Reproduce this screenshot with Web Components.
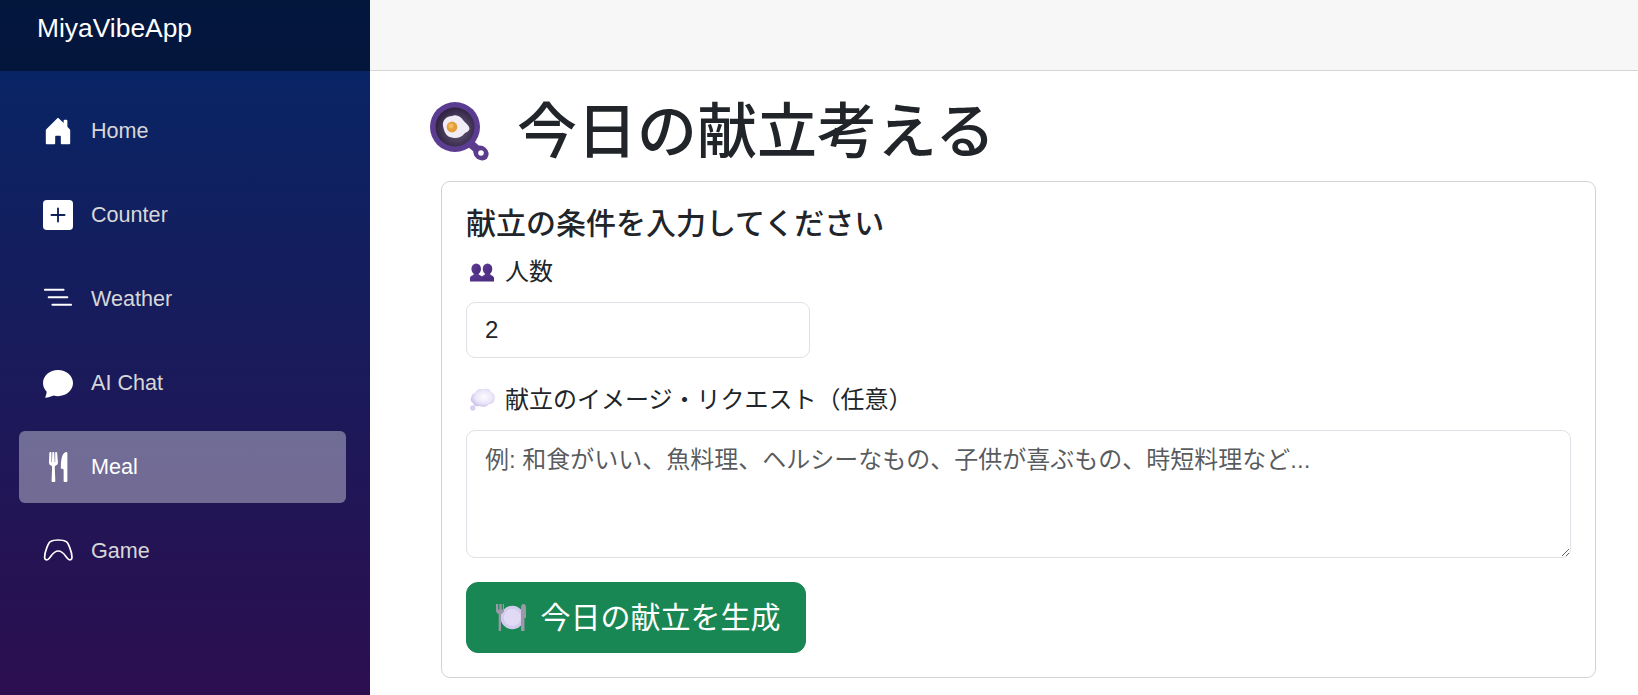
<!DOCTYPE html>
<html lang="ja"><head><meta charset="utf-8"><title>MiyaVibeApp</title>
<style>
html,body{margin:0;height:100%;overflow:hidden}
body{font-family:"Liberation Sans","Noto Sans CJK JP",sans-serif;font-size:24px;line-height:1.5;color:#212529;background:#fff}
</style></head><body>
<app-shell>
  <side-bar slot="side" brand="MiyaVibeApp">
    <nav-item icon="home">Home</nav-item>
    <nav-item icon="plus">Counter</nav-item>
    <nav-item icon="list">Weather</nav-item>
    <nav-item icon="chat">AI Chat</nav-item>
    <nav-item icon="meal" active>Meal</nav-item>
    <nav-item icon="game">Game</nav-item>
  </side-bar>
  <meal-page></meal-page>
</app-shell>
<script>
const def=(name,html)=>customElements.define(name,class extends HTMLElement{
  constructor(){super();const r=this.attachShadow({mode:'open'});r.innerHTML=typeof html==='function'?html(this):html}
});
const ICONS={
home:'<path d="M6.5 14.5v-3.505c0-.245.25-.495.5-.495h2c.25 0 .5.25.5.5v3.5a.5.5 0 0 0 .5.5h4a.5.5 0 0 0 .5-.5v-7a.5.5 0 0 0-.146-.354L13 5.793V2.5a.5.5 0 0 0-.5-.5h-1a.5.5 0 0 0-.5.5v1.293L8.354 1.146a.5.5 0 0 0-.708 0l-6 6A.5.5 0 0 0 1.5 7.5v7a.5.5 0 0 0 .5.5h4a.5.5 0 0 0 .5-.5Z"/>',
plus:'<path d="M2 0a2 2 0 0 0-2 2v12a2 2 0 0 0 2 2h12a2 2 0 0 0 2-2V2a2 2 0 0 0-2-2H2zm6.5 4.5v3h3a.5.5 0 0 1 0 1h-3v3a.5.5 0 0 1-1 0v-3h-3a.5.5 0 0 1 0-1h3v-3a.5.5 0 0 1 1 0z"/>',
list:'<g transform="translate(0 -.45)"><path fill-rule="evenodd" d="M4.5 11.5A.5.5 0 0 1 5 11h10a.5.5 0 0 1 0 1H5a.5.5 0 0 1-.5-.5zm-2-4A.5.5 0 0 1 3 7h10a.5.5 0 0 1 0 1H3a.5.5 0 0 1-.5-.5zm-2-4A.5.5 0 0 1 1 3h10a.5.5 0 0 1 0 1H1a.5.5 0 0 1-.5-.5z"/></g>',
chat:'<path d="M8 15c4.418 0 8-3.134 8-7s-3.582-7-8-7-8 3.134-8 7c0 1.76.743 3.37 1.97 4.6-.097 1.016-.417 2.13-.771 2.966-.079.186.074.394.273.362 2.256-.37 3.597-.938 4.18-1.234A9.06 9.06 0 0 0 8 15z"/>',
meal:'<path d="M13 .5c0-.276-.226-.506-.498-.465-1.703.257-2.94 2.012-3 8.462a.5.5 0 0 0 .498.5c.56.01 1 .13 1 1.003v5.5a.5.5 0 0 0 .5.5h1a.5.5 0 0 0 .5-.5V.5Z"/><path d="M4.25 0a.25.25 0 0 1 .25.25v5.122a.128.128 0 0 0 .256.006l.233-5.14A.25.25 0 0 1 5.24 0h.522a.25.25 0 0 1 .25.238l.233 5.14a.128.128 0 0 0 .256-.006V.25A.25.25 0 0 1 6.75 0h.29a.5.5 0 0 1 .498.458l.423 5.07a1.69 1.69 0 0 1-1.059 1.711l-.053.022a.92.92 0 0 0-.58.884l.3 7.355a.5.5 0 0 1-.5.5h-1a.5.5 0 0 1-.5-.5l.3-7.355a.92.92 0 0 0-.58-.884l-.053-.022a1.69 1.69 0 0 1-1.059-1.712L3.396.458A.5.5 0 0 1 3.894 0h.356Z"/>',
game:'<g transform="scale(.5333)" fill="none" stroke="#fff" stroke-width="1.7"><path d="M7.500 5.600C9 4.600 12 4 15.300 4S21.600 4.600 23.100 5.600C25 6.500 29.200 16 29 21.500C28.900 23.500 27.500 24.300 25.800 23.500C23 22 21 15 15.300 15S7.600 22 4.800 23.500C3.100 24.300 1.700 23.500 1.600 21.500C1.400 16 5.600 6.500 7.500 5.600Z"/></g>'
};
def('app-shell',`<style>:host{display:flex;height:695px;overflow:hidden}::slotted([slot=side]){flex:none}</style><slot name="side"></slot><slot></slot>`);
def('side-bar',h=>`<style>
:host{display:flex;flex-direction:column;width:370px;height:695px;background:linear-gradient(180deg,#052767 0,#3a0647 940px)}
.top{height:71px;flex:none;box-sizing:border-box;padding:10px 0 0 37px;background:rgba(0,0,0,.4);color:#fff;font-size:26.4px;line-height:37.5px}
nav{display:flex;flex-direction:column;gap:12px;padding:24px 24px 0 19px}
</style><div class="top">${h.getAttribute('brand')}</div><nav><slot></slot></nav>`);
def('nav-item',h=>`<style>
:host{display:flex;align-items:center;gap:18px;height:72px;box-sizing:border-box;padding:0 0 0 24px;border-radius:6px;color:#d7d7d7;font-size:21.6px}
:host([active]){background:rgba(255,255,255,.37);color:#fff}
svg{width:30px;height:30px;fill:#fff;flex:none}
</style><svg viewBox="0 0 16 16" aria-hidden="true">${ICONS[h.getAttribute('icon')]}</svg><slot></slot>`);
def('emoji-icon',h=>{
const k=h.getAttribute('name');
const A={
pan:`<svg viewBox="0 0 62 62" width="62" height="62"><defs><radialGradient id="p" cx=".55" cy=".55" r=".55"><stop offset="0" stop-color="#6b627f"/><stop offset=".65" stop-color="#463859"/><stop offset="1" stop-color="#2f2340"/></radialGradient></defs>
<path d="M43 43l9 8" stroke="#5b3c8c" stroke-width="8"/><ellipse cx="53" cy="52" rx="8" ry="7" transform="rotate(40 53 52)" fill="#5b3c8c"/><circle cx="53" cy="52" r="2.800" fill="#fff"/><circle cx="27" cy="26" r="25" fill="#5b3c90"/><circle cx="27" cy="26" r="19.500" fill="url(#p)"/>
<path d="M15 25C14 19 19 15 24 15C29 13 33 16 35 19C37 22 41 24 41.500 27.500C41 31 38 31 36 33C33 37 27 38 22 36C18 35 16 30 15 25Z" fill="#f1edf7"/><circle cx="24" cy="26" r="5.400" fill="#e39f3c"/><circle cx="23" cy="25" r="2.500" fill="#f2bc5e"/></svg>`,
ppl:`<svg viewBox="0 0 24 19" width="24" height="19"><defs><linearGradient id="g" x1="0" y1="0" x2="1" y2="1"><stop offset="0" stop-color="#5f3d99"/><stop offset="1" stop-color="#472878"/></linearGradient></defs><g fill="url(#g)"><ellipse cx="6.200" cy="6" rx="4.800" ry="5.500"/><ellipse cx="17.500" cy="6" rx="4.800" ry="5.500"/><path d="M0 18.500V15C0 13 3 12.500 4 11H8.500C9 12 11 12.500 12 13.500C13 12.500 14.500 12 15 11H20C21 12.500 24 13 24 15V18.500Z"/></g></svg>`,
cloud:`<svg viewBox="0 0 26 25" width="26" height="25" style="margin-right:-2px"><defs><radialGradient id="c" cx=".55" cy=".45" r=".6"><stop offset="0" stop-color="#fdfcff"/><stop offset=".6" stop-color="#ebe6f8"/><stop offset="1" stop-color="#c6bce8"/></radialGradient></defs><path d="M5 5C6 2 10 0 13 1.500C16 0 20 1 21 4C24 5 25.500 8 24.500 11C24.500 14 22 16 19 16C17 19 12 19.500 9.500 18C6.500 19 3.500 17.500 3 15C.5 13.500 .2 10.500 1.500 8.500C2 6.500 3.500 5 5 5Z" fill="url(#c)"/><circle cx="2.800" cy="20" r="2.700" fill="#d8d0f0"/></svg>`,
plate:`<svg viewBox="0 0 30 28" width="30" height="28"><circle cx="16.300" cy="13.500" r="11.700" fill="#d3cbed"/><circle cx="16.300" cy="13.500" r="8.500" fill="#e0daf4"/><path d="M0 0v6.500C0 8.500 1.300 9.500 2.700 10V27h2.300V10C6.500 9.500 8 8.500 8 6.500V0H6.800v5.500H5.600V0H3.400v5.500H2.200V0z" fill="#9b98a8"/><path d="M25 27V4C25 1.500 26 0 27.500 0S30 1.500 30 4V14H28.500V27z" fill="#9b98a8"/></svg>`};
return `<style>:host{display:inline-flex;flex:none;line-height:0}</style>${A[k]}`;});
def('meal-page',`<style>
:host{display:block;flex:1;min-width:0;font-family:"Liberation Sans","Noto Sans CJK JP",sans-serif}
.bar{height:71px;box-sizing:border-box;background:#f7f7f7;border-bottom:1px solid #d6d5d5}
main{padding:26px 42px 0 58px}
h1{margin:0 0 12px;display:flex;align-items:center;gap:27px;font-size:60px;font-weight:500;line-height:72px;height:72px}
h1 emoji-icon{margin-top:-3px}
.wrap{margin-left:13px}
</style><div class="bar"></div><main><h1><emoji-icon name="pan"></emoji-icon><span>今日の献立考える</span></h1><div class="wrap"><meal-form></meal-form></div></main>`);
def('meal-form',`<style>
:host{display:block;box-sizing:border-box;border:1px solid rgba(0,0,0,.175);border-radius:9px;padding:24px}
h5{margin:0 0 12px;font-size:30px;font-weight:500;line-height:36px}
label{display:flex;align-items:center;gap:11px;height:36px;margin:0 0 12px;padding-left:4px}
input,textarea{display:block;box-sizing:border-box;font:inherit;font-family:"Liberation Sans","Noto Sans CJK JP",sans-serif;color:#212529;border:1px solid #dee2e6;border-radius:9px;padding:9px 18px;background:#fff;outline:0;margin:0}
input{width:344px;height:56px;margin-bottom:24px}
textarea{width:100%;height:128px;margin-bottom:24px;padding-top:11px}
textarea::placeholder{color:rgba(33,37,41,.75);opacity:1}
button{display:inline-flex;align-items:center;gap:14.5px;box-sizing:border-box;height:71px;padding:0 24px 0 29px;border:1px solid #198754;border-radius:12px;background:#198754;color:#fff;font:inherit;font-size:30px;vertical-align:top}
</style><h5>献立の条件を入力してください</h5>
<label><emoji-icon name="ppl"></emoji-icon><span>人数</span></label>
<input type="number" value="2">
<label><emoji-icon name="cloud"></emoji-icon><span>献立のイメージ・リクエスト（任意）</span></label>
<textarea placeholder="例: 和食がいい、魚料理、ヘルシーなもの、子供が喜ぶもの、時短料理など..."></textarea>
<button type="button"><emoji-icon name="plate"></emoji-icon><span>今日の献立を生成</span></button>`);
</script>
</body></html>
